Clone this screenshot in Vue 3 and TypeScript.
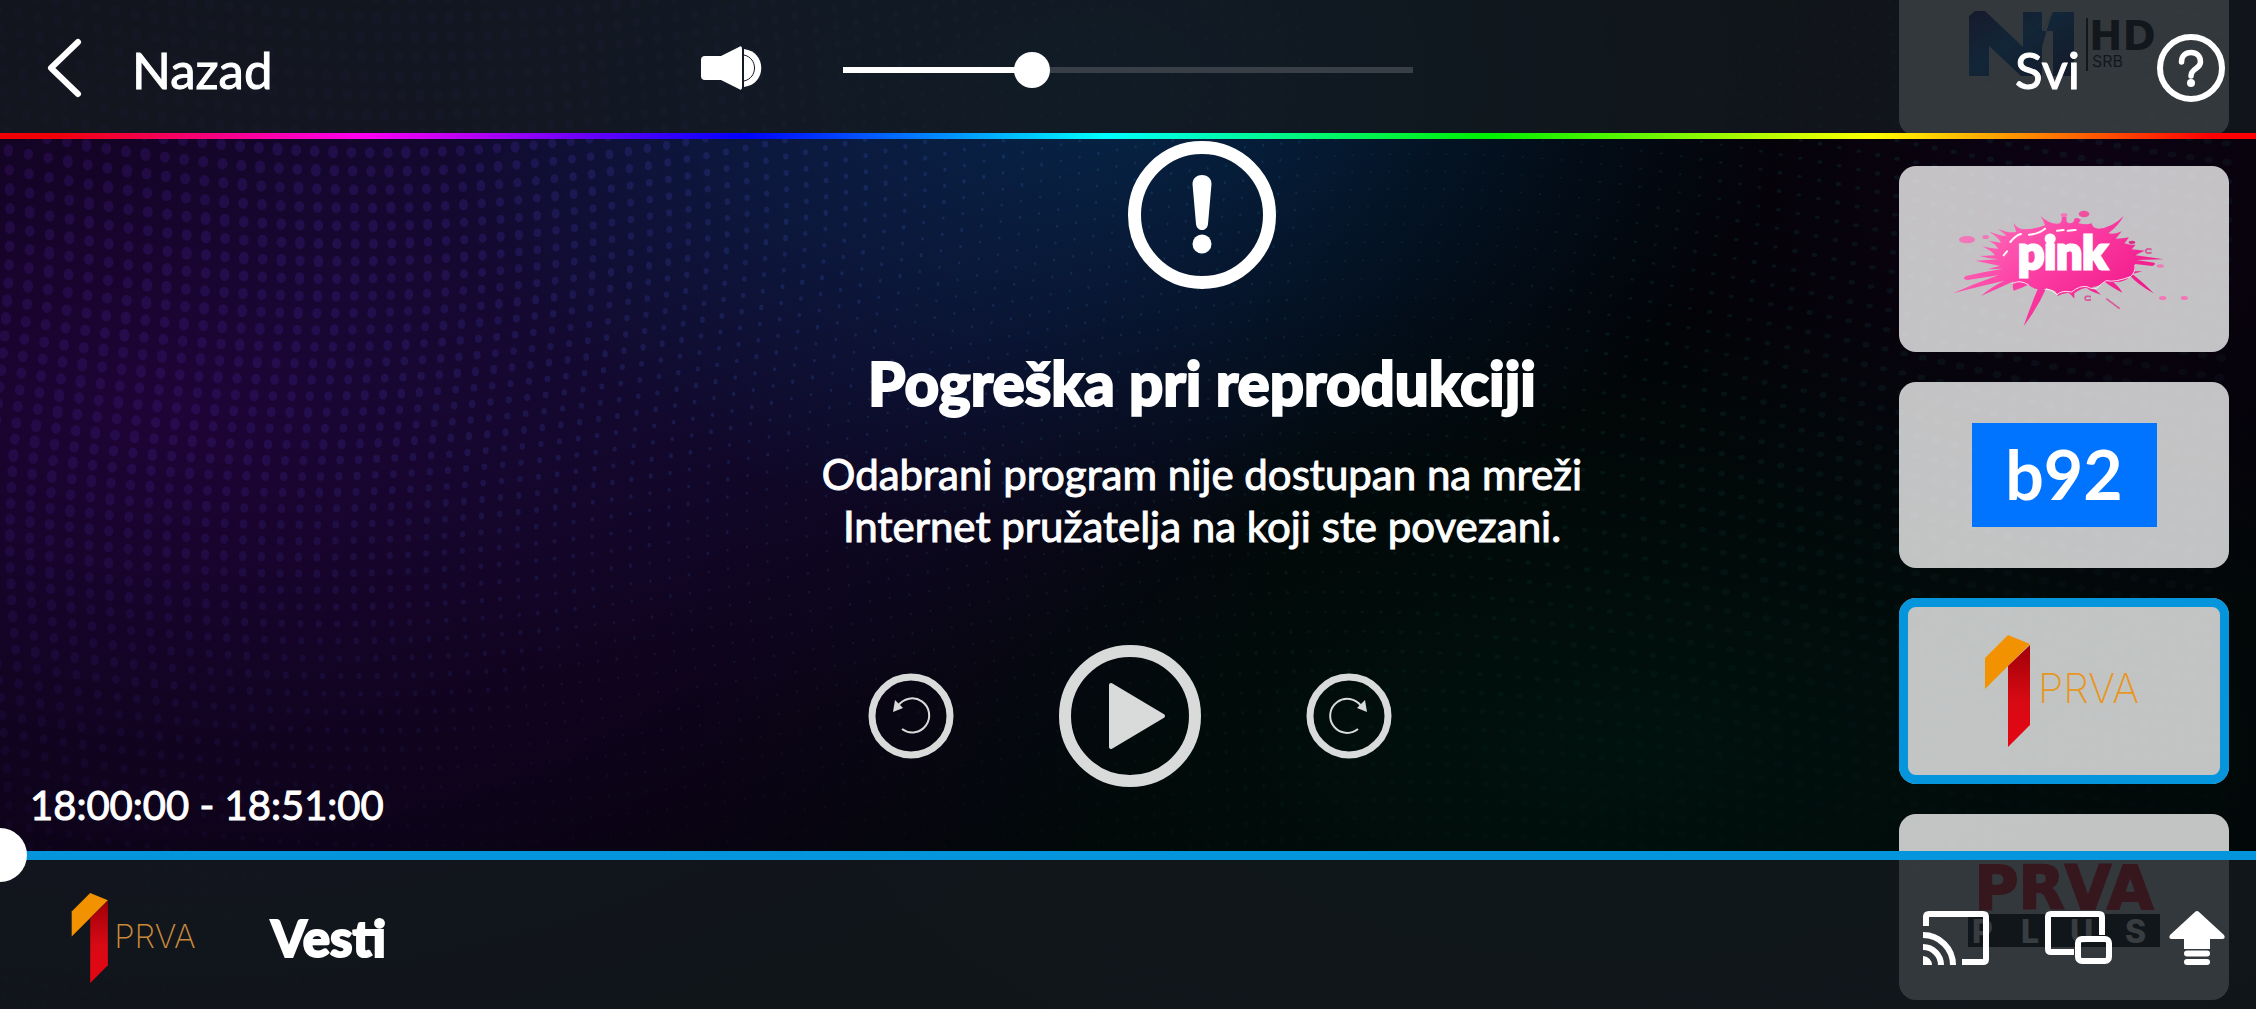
<script setup lang="ts">
import { ref, computed } from 'vue'

interface Channel {
  id: string
  name: string
}

const channels: Channel[] = [
  { id: 'n1', name: 'N1 HD SRB' },
  { id: 'pink', name: 'Pink' },
  { id: 'b92', name: 'B92' },
  { id: 'prva', name: 'Prva' },
  { id: 'prvaplus', name: 'Prva Plus' },
]

const active = ref('prva')
const volume = ref(32)
const position = ref(0)

const volumeFill = computed(() => `${volume.value}%`)

// Halftone wave of the backdrop: rows of dots that follow a cosine curve
// and shrink towards the top right.
function buildDots(): string {
  const parts: string[] = []
  for (let row = -4; row < 60; row++) {
    for (let col = 0; col < 118; col++) {
      const x = col * 19 + 10 * Math.sin(row / 6) + 6 * Math.sin(col / 7)
      const y = row * 18 + 64 * Math.cos((x - 360) / 330) + 18 * Math.sin(row / 9 + x / 500)
      if (y < -10 || y > 1020) continue
      const size = 2.8 + 2.2 * Math.cos((x - 200) / 360 + (y - 160) / 420)
      const rx = Math.max(1.2, size)
      const ry = rx * (x > 1300 ? 0.7 : 1.15)
      const X = x.toFixed(1)
      const Y = y.toFixed(1)
      const a = rx.toFixed(1)
      const b = ry.toFixed(1)
      const d = (rx * 2).toFixed(1)
      parts.push(`M${X} ${Y}m-${a} 0a${a} ${b} 0 1 0 ${d} 0a${a} ${b} 0 1 0 -${d} 0`)
    }
  }
  return parts.join('')
}
const dots = buildDots()
</script>

<template>
  <div class="player">
    <svg class="backdrop" viewBox="0 0 2256 1009" preserveAspectRatio="none" aria-hidden="true">
      <defs>
        <linearGradient id="dotFill" x1="0" y1="0" x2="1" y2="0.35">
          <stop offset="0" stop-color="#4c1a90" stop-opacity=".26" />
          <stop offset=".25" stop-color="#42289c" stop-opacity=".3" />
          <stop offset=".5" stop-color="#1f5c9c" stop-opacity=".34" />
          <stop offset=".72" stop-color="#0f5a50" stop-opacity=".26" />
          <stop offset="1" stop-color="#1c3040" stop-opacity=".2" />
        </linearGradient>
        <linearGradient id="fade" x1="0" y1="0" x2="0" y2="1">
          <stop offset="0" stop-color="#fff" />
          <stop offset=".45" stop-color="#fff" stop-opacity=".8" />
          <stop offset=".85" stop-color="#fff" stop-opacity=".2" />
        </linearGradient>
        <mask id="fadeMask"><rect width="2256" height="1009" fill="url(#fade)" /></mask>
      </defs>
      <path :d="dots" fill="url(#dotFill)" mask="url(#fadeMask)" />
    </svg>

    <nav class="rail" aria-label="Kanali">
      <button
        v-for="c in channels"
        :key="c.id"
        type="button"
        class="card"
        :class="{ active: active === c.id }"
        :aria-label="c.name"
        @click="active = c.id"
      >
        <svg v-if="c.id === 'n1'" class="art" viewBox="0 0 330 186">
          <defs>
            <linearGradient id="n1" x1="0" y1="0" x2="1" y2="1">
              <stop offset="0" stop-color="#2a1f6e" />
              <stop offset=".45" stop-color="#0a5fa8" />
              <stop offset="1" stop-color="#151c60" />
            </linearGradient>
          </defs>
          <path d="M70 126V66l6-5h10l38 36V62h19v35l10-35h22v64h-21V81h-11v45H122L90 96v30z" fill="url(#n1)" />
          <path d="M144 81l10-19" stroke="#9aa" stroke-width="1" />
          <path d="M188 68v53" stroke="#111" stroke-width="2" />
          <text x="190" y="100" class="n1-hd">HD</text>
          <text x="193" y="117" class="n1-srb">SRB</text>
        </svg>

        <svg v-else-if="c.id === 'pink'" class="art" viewBox="0 0 330 186">
          <defs>
            <linearGradient id="pk" x1="0" y1="0" x2="1" y2=".6">
              <stop offset="0" stop-color="#ff7cc0" />
              <stop offset=".5" stop-color="#fc3fa4" />
              <stop offset="1" stop-color="#f01688" />
            </linearGradient>
          </defs>
          <g transform="translate(46 34) scale(.3333)">
            <path
              fill="url(#pk)"
              d="M205 68Q218 88 240 88Q270 88 300 76Q296 60 286 48Q318 76 345 70Q352 64 350 52Q358 48 365 52Q362 68 372 70Q388 70 388 56Q398 50 408 60L400 70Q425 76 440 70Q442 84 460 86Q500 84 536 48Q520 78 490 100Q512 104 530 94Q520 108 512 116Q536 116 552 112Q544 124 538 130Q560 136 572 134Q564 144 560 148Q582 150 600 152Q580 160 572 166L656 178L575 180L628 188Q634 194 622 198L570 192Q574 206 568 214L592 214L562 222Q600 252 626 280Q576 252 556 228Q540 248 505 246Q525 264 532 278Q500 262 480 246Q466 258 440 262Q455 270 468 284Q440 276 425 264Q410 264 388 280L388 296Q380 284 370 278Q350 280 338 288Q334 272 322 270Q312 268 304 264Q280 320 236 378Q256 320 278 268Q262 264 250 254Q230 264 206 272Q200 256 206 244Q150 270 108 288Q140 260 178 242Q90 262 24 280Q90 250 160 226L68 240Q48 238 62 228Q110 216 176 206L128 208Q150 200 166 198Q130 190 90 182L160 178Q130 176 104 168L150 166Q140 152 110 138Q140 146 160 146Q150 130 130 122L168 128Q160 112 130 94Q165 108 184 108Q176 98 158 86Q190 100 214 96Q210 84 205 68z"
            />
            <g fill="#f277b8">
              <ellipse cx="66" cy="119" rx="24" ry="11" />
              <ellipse cx="122" cy="111" rx="10" ry="6" />
              <ellipse cx="357" cy="45" rx="10" ry="6" />
              <ellipse cx="417" cy="42" rx="16" ry="10" fill="#f0509f" />
              <ellipse cx="561" cy="127" rx="10" ry="5" fill="#d92c83" />
              <ellipse cx="646" cy="198" rx="11" ry="5" />
              <ellipse cx="653" cy="294" rx="11" ry="6" />
              <ellipse cx="718" cy="294" rx="11" ry="6" />
            </g>
            <path d="M620 148q-18-4-18 5t18 5M438 290q-18-4-18 5t18 4M484 296l40 30" fill="none" stroke="#d9579c" stroke-width="5" />
            <g fill="none" stroke="#fff" stroke-linecap="round">
              <path d="M196 126Q214 104 228 102M252 104Q280 102 300 86M336 92l20-2M368 92l24-2M176 166l10-12" stroke-width="6" />
              <path d="M204 250q20-12 46 4M300 268q18-2 36 16q14-14 44-8q24-20 46-16q20 10 30 4q14-14 28-22q26 6 72-12q16-12 14-34" stroke-width="3" opacity=".85" />
            </g>
          </g>
          <text x="119" y="103" class="pink-text">pink</text>
        </svg>

        <svg v-else-if="c.id === 'b92'" class="art" viewBox="0 0 330 186">
          <rect x="73" y="41" width="185" height="104" fill="#0073ff" />
          <text x="165" y="118" text-anchor="middle" class="b92-text">b92</text>
        </svg>

        <svg v-else-if="c.id === 'prva'" class="art" viewBox="0 0 330 186">
          <defs>
            <linearGradient id="prvaRed" x1="0" y1="0" x2="0" y2="1">
              <stop offset="0" stop-color="#a00008" />
              <stop offset=".55" stop-color="#d80a14" />
              <stop offset="1" stop-color="#e30613" />
            </linearGradient>
          </defs>
          <g transform="translate(86 37)">
            <path d="M0 23L23 0L45 9L0 54z" fill="#f39200" />
            <path d="M23 31L45 10V90L23 112z" fill="url(#prvaRed)" />
            <text x="53" y="68" class="prva-text">PRVA</text>
          </g>
        </svg>

        <svg v-else class="art" viewBox="0 0 330 186">
          <text x="165" y="95" text-anchor="middle" class="plus-title">PRVA</text>
          <rect x="69" y="100" width="192" height="33" fill="#0a0a0a" />
          <g class="plus-sub">
            <text x="73" y="129">P</text>
            <text x="122" y="129">L</text>
            <text x="171" y="129">U</text>
            <text x="226" y="129">S</text>
          </g>
        </svg>
      </button>
    </nav>

    <header class="top">
      <button type="button" class="back">
        <svg width="36" height="60" viewBox="0 0 36 60" aria-hidden="true">
          <path d="M32 4L5 30L32 56" fill="none" stroke="#fff" stroke-width="6" stroke-linecap="round" stroke-linejoin="round" />
        </svg>
        <span>Nazad</span>
      </button>
      <div class="volume">
        <svg width="60" height="44" viewBox="0 0 60 44" aria-hidden="true">
          <path d="M4 10H20L38 1Q41 -1 41 3V41Q41 45 38 43L20 34H4Q0 34 0 30V14Q0 10 4 10z" fill="#fff" />
          <path d="M43 3C66 6 66 38 43 41z" fill="#fff" />
          <path d="M43 9C57 12 57 32 43 35" fill="none" stroke="#10161f" stroke-width="1" />
        </svg>
        <input v-model.number="volume" type="range" min="0" max="100" aria-label="Glasnoća" class="vol-range" :style="{ '--fill': volumeFill }" />
      </div>
      <div class="top-right">
        <button type="button" class="all">Svi</button>
        <button type="button" class="icon" aria-label="Pomoć">
          <svg width="68" height="68" viewBox="0 0 68 68">
            <circle cx="34" cy="34" r="31" fill="none" stroke="#fff" stroke-width="6" />
            <path d="M24.500 28C24.500 22 28.500 18.500 34 18.500S43.500 22 43.500 28C43.500 35 34 34 34 42" fill="none" stroke="#fff" stroke-width="5.500" stroke-linecap="round" />
            <circle cx="34" cy="49" r="4" fill="#fff" />
          </svg>
        </button>
      </div>
    </header>

    <main class="stage">
      <section class="error" role="alert">
        <svg width="148" height="148" viewBox="0 0 148 148" aria-hidden="true">
          <circle cx="74" cy="74" r="67.500" fill="none" stroke="#fff" stroke-width="13" />
          <path d="M64.500 43C64.500 31 83.500 31 83.500 43L80 83C79 91 69 91 68 83z" fill="#fff" />
          <circle cx="74" cy="103" r="9.500" fill="#fff" />
        </svg>
        <h1>Pogreška pri reprodukciji</h1>
        <p>Odabrani program nije dostupan na mreži<br />Internet pružatelja na koji ste povezani.</p>
      </section>

      <div class="controls">
        <button type="button" class="icon" aria-label="Natrag">
          <svg width="86" height="86" viewBox="0 0 86 86">
            <circle cx="43" cy="43" r="39" fill="none" stroke="#d9dbdb" stroke-width="7" />
            <path d="M30 33A17 17 0 1 1 34 56" fill="none" stroke="#d9dbdb" stroke-width="2" />
            <path d="M25 39L27 27L35 35z" fill="#d9dbdb" />
          </svg>
        </button>
        <button type="button" class="icon" aria-label="Reproduciraj">
          <svg width="142" height="142" viewBox="0 0 142 142">
            <circle cx="71" cy="71" r="65" fill="none" stroke="#d9dbdb" stroke-width="12" />
            <path d="M52 40L104 71L52 102z" fill="#d9dbdb" stroke="#d9dbdb" stroke-width="4" stroke-linejoin="round" />
          </svg>
        </button>
        <button type="button" class="icon" aria-label="Naprijed">
          <svg width="86" height="86" viewBox="0 0 86 86">
            <circle cx="43" cy="43" r="39" fill="none" stroke="#d9dbdb" stroke-width="7" />
            <path d="M55 33A17 17 0 1 0 52 56" fill="none" stroke="#d9dbdb" stroke-width="2" />
            <path d="M61 39L59 27L51 35z" fill="#d9dbdb" />
          </svg>
        </button>
      </div>

      <time class="clock">18:00:00 - 18:51:00</time>
    </main>

    <footer class="bottom">
      <div class="timeline">
        <input v-model.number="position" type="range" min="0" max="100" aria-label="Položaj" class="time-range" />
      </div>
      <div class="info">
        <svg class="mini-logo" width="130" height="90" viewBox="0 0 160 112" role="img" aria-label="Prva">
          <path d="M0 23L23 0L45 9L0 54z" fill="#f39200" />
          <path d="M23 31L45 10V90L23 112z" fill="url(#prvaRed)" />
          <text x="53" y="68" class="prva-text dim">PRVA</text>
        </svg>
        <h2>Vesti</h2>
        <div class="actions">
          <button type="button" class="icon" aria-label="Emitiraj">
            <svg width="66" height="54" viewBox="0 0 66 54">
              <path d="M3 15V6Q3 3 6 3H60Q63 3 63 6V48Q63 51 60 51H39" fill="none" stroke="#fff" stroke-width="6" />
              <path d="M0 45A9 9 0 0 1 9 54H0z" fill="#fff" />
              <path d="M0 36A18 18 0 0 1 18 54M0 24A30 30 0 0 1 30 54" fill="none" stroke="#fff" stroke-width="6" />
            </svg>
          </button>
          <button type="button" class="icon" aria-label="Slika u slici">
            <svg width="68" height="54" viewBox="0 0 68 54">
              <path d="M29 41H6Q3 41 3 38V6Q3 3 6 3H54Q57 3 57 6V24" fill="none" stroke="#fff" stroke-width="6" />
              <rect x="33" y="28" width="31" height="22" rx="4" fill="none" stroke="#fff" stroke-width="6" />
            </svg>
          </button>
          <button type="button" class="icon" aria-label="Gore">
            <svg width="56" height="54" viewBox="0 0 56 54">
              <path d="M26 1Q28 -1 30 1L55 24Q57 28 53 28H41V38H15V28H3Q-1 28 1 24z" fill="#fff" />
              <rect x="15" y="39.500" width="26" height="6" rx="3" fill="#fff" />
              <rect x="15" y="48" width="26" height="6" rx="3" fill="#fff" />
            </svg>
          </button>
        </div>
      </div>
    </footer>
  </div>
</template>

<style>
html,
body {
  margin: 0;
  background: #020305;
}
</style>

<style scoped>
.player {
  position: relative;
  display: grid;
  grid-template-columns: minmax(0, 1fr) 357px;
  grid-template-rows: auto minmax(0, 1fr) auto;
  height: 100vh;
  overflow: hidden;
  color: #fff;
  font-family: Lato, 'Open Sans', sans-serif;
  background:
    radial-gradient(ellipse 30% 46% at 49% 8%, rgba(6, 44, 82, 0.8), transparent 100%),
    radial-gradient(ellipse 30% 60% at 34% 10%, rgba(18, 20, 72, 0.6), transparent 100%),
    radial-gradient(ellipse 50% 72% at 8% 40%, rgba(32, 4, 58, 0.95), transparent 100%),
    radial-gradient(ellipse 42% 44% at 72% 74%, rgba(0, 22, 15, 0.8), transparent 100%),
    radial-gradient(ellipse 20% 50% at 92% 14%, rgba(20, 2, 28, 0.6), transparent 100%),
    #020306;
}

button {
  padding: 0;
  border: 0;
  background: none;
  color: inherit;
  font: inherit;
  cursor: pointer;
}

svg {
  display: block;
  overflow: visible;
}

.backdrop {
  position: absolute;
  inset: 0;
  width: 100%;
  height: 100%;
}

/* Channel rail: runs behind the header and the footer */
.rail {
  grid-column: 2;
  grid-row: 1 / -1;
  position: relative;
  display: flex;
  flex-direction: column;
  justify-content: flex-end;
  gap: 30px;
  min-height: 0;
  padding: 0 27px 9px 0;
}

.card {
  flex: none;
  height: 186px;
  border-radius: 17px;
  background: rgba(255, 255, 255, 0.76);
}

.card.active {
  box-shadow: inset 0 0 0 9px #0495dc;
}

.art {
  width: 100%;
  height: 100%;
}

.n1-hd {
  font: bold 40px 'DejaVu Sans', sans-serif;
  fill: #0c0f14;
}

.n1-srb {
  font: 16px Inter, sans-serif;
  fill: #0c0f14;
}

.pink-text {
  font: 900 46px Lato, sans-serif;
  fill: #fff;
  stroke: #fff;
  stroke-width: 3px;
}

.b92-text {
  font: 700 68px Lato, sans-serif;
  fill: #fff;
}

.prva-text {
  font: 200 41px Inter, sans-serif;
  fill: #e8961e;
}

.prva-text.dim {
  fill: #c98a3a;
}

.plus-title {
  font: bold 60px 'DejaVu Sans', sans-serif;
  fill: #d2101c;
  stroke: #d2101c;
  stroke-width: 2px;
}

.plus-sub {
  font: 800 32px Inter, sans-serif;
  fill: #d8dadb;
}

/* Header */
.top {
  grid-column: 1 / -1;
  grid-row: 1;
  position: relative;
  display: grid;
  grid-template-columns: 31.5% minmax(0, 1fr) auto;
  align-items: center;
  height: 130px;
  padding: 3px 31px 6px 0;
  background: rgba(20, 26, 31, 0.82);
  font-size: 51px;
  line-height: 60px;
  -webkit-text-stroke: 1px #fff;
}

.top::after {
  content: '';
  position: absolute;
  right: 0;
  bottom: 0;
  left: 0;
  height: 6px;
  background: linear-gradient(
    90deg,
    #f00000 0%,
    #f00000 2%,
    #ff00f0 16%,
    #0000ff 33%,
    #00ffff 49%,
    #00f000 66%,
    #ffff00 83%,
    #ff0000 98%
  );
}

.back {
  display: flex;
  align-items: center;
  gap: 50px;
  padding-left: 46px;
}

.volume {
  display: flex;
  align-items: center;
  gap: 82px;
}

.top-right {
  display: flex;
  align-items: center;
  gap: 77px;
}

.back span,
.all {
  padding-top: 4px;
}

input[type='range'] {
  appearance: none;
  margin: 0;
  background: none;
}

input.vol-range {
  flex: 0 1 570px;
  min-width: 0;
  height: 36px;
  margin-top: 4px;
}

.vol-range::-webkit-slider-runnable-track {
  height: 6px;
  background: linear-gradient(90deg, #fff var(--fill), #393f47 var(--fill));
}

.vol-range::-webkit-slider-thumb {
  appearance: none;
  width: 36px;
  height: 36px;
  margin-top: -15px;
  border-radius: 50%;
  background: #fff;
}

/* Stage */
.stage {
  grid-column: 1 / -1;
  grid-row: 2;
  position: relative;
  display: flex;
  flex-direction: column;
  padding: 2px 0 30px;
  pointer-events: none;
}

.stage button {
  pointer-events: auto;
}

.error {
  display: flex;
  flex-direction: column;
  align-items: center;
  padding-left: 148px;
  text-align: center;
}

h1 {
  margin: 58px 0 29px;
  font-size: 60px;
  font-weight: 900;
  line-height: 72px;
  -webkit-text-stroke: 2px #fff;
}

p {
  margin: 0;
  font-size: 42px;
  line-height: 52px;
  -webkit-text-stroke: 1px #fff;
}

.controls {
  display: flex;
  align-items: center;
  justify-content: center;
  gap: 105px;
  margin-top: 93px;
  padding-left: 4px;
}

.clock {
  margin: auto 0 0 30px;
  font-size: 40px;
  line-height: 32px;
  -webkit-text-stroke: 1px #fff;
}

/* Footer */
.bottom {
  grid-column: 1 / -1;
  grid-row: 3;
  position: relative;
}

.timeline {
  display: flex;
  align-items: center;
  height: 9px;
  margin: 0 -27px;
}

.time-range {
  flex: 1;
  height: 54px;
}

.time-range::-webkit-slider-runnable-track {
  height: 9px;
  background: #0495dc;
}

.time-range::-webkit-slider-thumb {
  appearance: none;
  width: 54px;
  height: 54px;
  margin-top: -23px;
  border-radius: 50%;
  background: #fff;
}

.info {
  display: flex;
  align-items: center;
  gap: 70px;
  height: 143px;
  padding: 6px 31px 0 71px;
  background: rgba(20, 26, 31, 0.82);
}

h2 {
  margin: 0;
  font-size: 51px;
  font-weight: 900;
  line-height: 60px;
  -webkit-text-stroke: 2px #fff;
}

.actions {
  display: flex;
  align-items: center;
  gap: 56px;
  margin-left: auto;
}
</style>
